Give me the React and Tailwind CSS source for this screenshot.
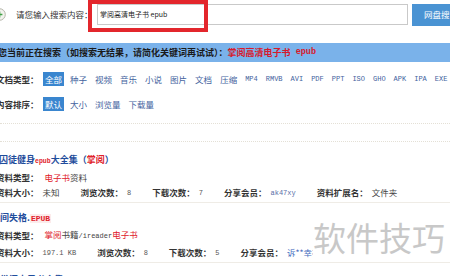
const types = ["全部", "种子", "视频", "音乐", "小说", "图片", "文档", "压缩"];
const exts = ["MP4", "RMVB", "AVI", "PDF", "PPT", "ISO", "GHO", "APK", "IPA", "EXE"];
const sorts = ["默认", "大小", "浏览量", "下载量"];

function Mono({ children, className = "" }) {
  return <span className={`font-['Liberation_Mono',monospace] ${className}`}>{children}</span>;
}

function FilterRow({ label, items, latin = [], className = "" }) {
  return (
    <div className={`flex items-center h-[14px] -ml-[4px] whitespace-nowrap ${className}`}>
      <span className="font-bold text-[8.5px] text-[#333] shrink-0">{label}</span>
      <div className="flex items-center gap-[4px] ml-[4.5px]">
        {items.map((t, i) => (
          <span
            key={t}
            className={`px-[2px] h-[14px] leading-[14px] text-[8.5px] ${
              i === 0 ? "bg-[#3a86cf] text-white" : "text-[#44639e]"
            }`}
          >
            {t}
          </span>
        ))}
        {latin.map((t) => (
          <Mono key={t} className="px-[2px] h-[14px] leading-[14px] text-[7px] text-[#44639e]">
            {t}
          </Mono>
        ))}
      </div>
    </div>
  );
}

function Field({ label, children }) {
  return (
    <span className="flex items-center shrink-0">
      <span className="font-bold text-[#333]">{label}</span>
      <span className="ml-[4px] font-normal">{children}</span>
    </span>
  );
}

export default function App() {
  return (
    <div className="relative w-[450px] h-[276px] overflow-hidden bg-white font-['Noto_Sans_CJK_SC',sans-serif]">
      {/* search bar */}
      <div className="flex items-center h-[29px] whitespace-nowrap">
        <svg className="-ml-[7px] shrink-0" width="13" height="13" viewBox="0 0 13 13">
          <circle cx="6.5" cy="6.5" r="5.8" fill="#f3f3ee" stroke="#b5b5aa" strokeWidth="1" />
          <path d="M6.5 3.6v5.8M3.6 6.5h5.8" stroke="#3d9f43" strokeWidth="1.6" />
        </svg>
        <span className="ml-[10px] text-[8.5px] text-[#333] shrink-0">请您输入搜索内容：</span>
        <div className="ml-[4.5px] w-[311px] h-[21px] shrink-0 border border-[#c9c9c9] bg-white flex items-center pl-[2px] text-[7px] text-[#222]">
          掌阅高清电子书 epub
        </div>
        <div className="ml-[4px] w-[40px] h-[22px] shrink-0 bg-[#4a93d3] text-white text-[8.5px] flex items-center pl-[12px]">
          网盘搜索
        </div>
      </div>

      {/* current search bar */}
      <div className="mt-[14px] h-[19px] bg-[#7ab2ea] flex items-center whitespace-nowrap text-[9px] font-bold text-[#1a1a1a]">
        <span className="-ml-[2px]">您当前正在搜索（如搜索无结果，请简化关键词再试试）：</span>
        <span className="text-[#d8192a]">掌阅高清电子书</span>
        <Mono className="text-[#d8192a] text-[8.5px]">&nbsp;epub</Mono>
      </div>

      <FilterRow label="文档类型：" items={types} latin={exts} className="mt-[10px]" />
      <FilterRow label="内容排序：" items={sorts} className="mt-[11px]" />

      <div className="mt-[12px] border-t border-dotted border-[#e4e0d6]" />
      <div className="mt-[17px] border-t border-dotted border-[#e4e0d6]" />

      {/* result 1 */}
      <div className="mt-[12px] h-[12px] leading-[12px] -ml-[1px] whitespace-nowrap text-[9px] font-bold text-[#1f4d9c]">
        囚徒健身<Mono className="text-[6.5px] text-[#e0202a]">epub</Mono>大全集（<span className="text-[#e0202a]">掌阅</span>）
      </div>
      <div className="mt-[5px] h-[12px] -ml-[4px] flex items-center text-[8.5px] whitespace-nowrap">
        <Field label="资料类型：">
          <span className="ml-[2px] text-[#e0202a]">电子书</span>
          <span className="text-[#444]">资料</span>
        </Field>
      </div>
      <div className="mt-[3px] h-[12px] -ml-[4px] flex items-center gap-[21px] text-[8.5px] whitespace-nowrap">
        <Field label="资料大小：">
          <span className="text-[#444]">未知</span>
        </Field>
        <Field label="浏览次数：">
          <Mono className="text-[7px] text-[#555]">8</Mono>
        </Field>
        <Field label="下载次数：">
          <Mono className="text-[7px] text-[#555]">7</Mono>
        </Field>
        <Field label="分享会员：">
          <Mono className="text-[7px] text-[#5a6fa8]">ak47xy</Mono>
        </Field>
        <Field label="资料扩展名：">
          <span className="text-[#444]">文件夹</span>
        </Field>
      </div>
      <div className="mt-[4px] border-t border-[#efece6]" />

      {/* result 2 */}
      <div className="mt-[9px] h-[12px] leading-[12px] whitespace-nowrap text-[9px] font-bold text-[#1f4d9c]">
        间失格.<Mono className="px-[1px] text-[8px] text-[#e0202a] bg-[#fcebeb]">EPUB</Mono>
      </div>
      <div className="mt-[5px] h-[12px] -ml-[4px] flex items-center text-[8.5px] whitespace-nowrap">
        <Field label="资料类型：">
          <span className="ml-[2px] text-[#e0202a]">掌阅</span>
          <span className="text-[#444]">书籍</span>
          <Mono className="text-[7px] text-[#444]">/ireader</Mono>
          <span className="text-[#e0202a]">电子书</span>
        </Field>
      </div>
      <div className="mt-[5px] h-[12px] -ml-[4px] flex items-center gap-[21px] text-[8.5px] whitespace-nowrap">
        <Field label="资料大小：">
          <Mono className="text-[7px] text-[#555]">197.1 KB</Mono>
        </Field>
        <Field label="浏览次数：">
          <Mono className="text-[7px] text-[#555]">8</Mono>
        </Field>
        <Field label="下载次数：">
          <Mono className="text-[7px] text-[#555]">5</Mono>
        </Field>
        <Field label="分享会员：">
          <span className="text-[#4a6fc0]">诉**幸福</span>
        </Field>
      </div>
      <div className="mt-[4px] border-t border-[#efece6]" />

      {/* result 3 (cut) */}
      <div className="mt-[11px] h-[12px] leading-[12px] whitespace-nowrap text-[9px] font-bold text-[#1f4d9c]">
        掌阅电子书合集
      </div>

      {/* red highlight annotation */}
      <div className="absolute left-[88px] top-0 w-[120px] h-[32px] border-[4px] border-[#e3262c]" />

      {/* watermark */}
      <div className="absolute left-[313px] top-[221px] w-[137px] h-[36px] bg-white text-[33px] leading-[33px] text-[#c8c8c8] whitespace-nowrap">
        软件技巧
      </div>
    </div>
  );
}
